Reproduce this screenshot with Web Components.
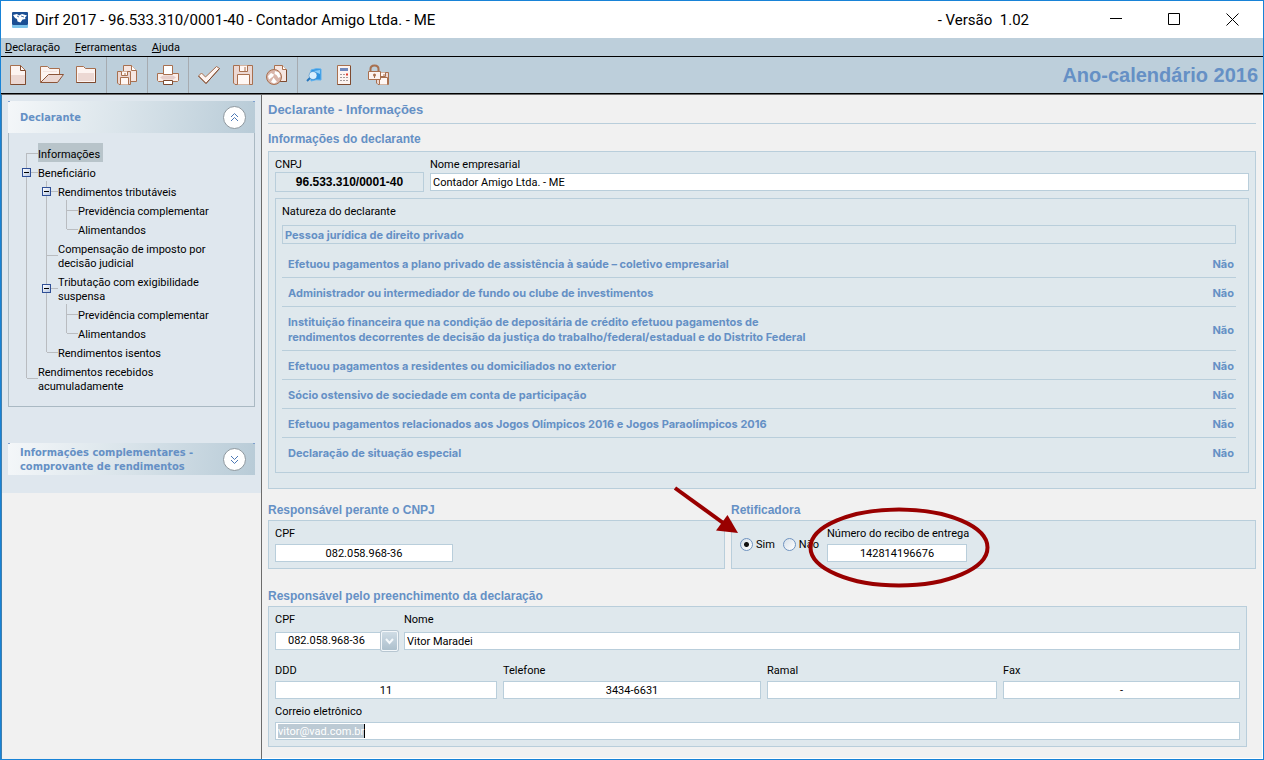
<!DOCTYPE html>
<html lang="pt-BR">
<head>
<meta charset="utf-8">
<title>Dirf 2017</title>
<style>
  :root {
    --blue: #6590c5;
    --bar: #bdcfdb;
    --panel: #dfe8ed;
    --page: #f1f1f1;
    --line: #b9cedb;
    --edge: #1883d7;
    --ui: Roboto, "Liberation Sans", sans-serif;
    --head: "Liberation Sans", Arial, sans-serif;
  }
  body { margin: 0; font: 11px/14px var(--ui); color: #000; }
</style>
</head>
<body>
<dirf-app></dirf-app>

<script>
const define = (name, html, ready) => {
  const template = document.createElement('template');
  template.innerHTML = '<style>*{box-sizing:border-box}:host{box-sizing:border-box}button,input,select{font:inherit;color:inherit}</style>' + html;
  customElements.define(name, class extends HTMLElement {
    constructor() {
      super();
      this.attachShadow({ mode: 'open' }).append(template.content.cloneNode(true));
    }
    connectedCallback() {
      if (ready && !this.done) { this.done = true; ready(this, this.shadowRoot); }
    }
  });
};

/* Toolbar glyphs, each on a 24 x 24 grid */
const floppy = (x, y, s) => `<g transform="translate(${x} ${y})"><path d="M.5 .5H${s - .5}V${s - .5}H2L.5 ${s - 2}Z" fill="#ecd8d3"/><path d="M${Math.round(s * .3) + .5} .5v${Math.round(s * .3)}h${Math.round(s * .42)}v-${Math.round(s * .3)}M${Math.round(s * .2) + .5} ${s - .5}v-${Math.round(s * .5)}h${Math.round(s * .6)}v${Math.round(s * .5)}" fill="#fff7f4"/><path d="M${Math.round(s * .6)} 2v${Math.round(s * .18)}"/></g>`;
const ICONS = {
  file: '<path d="M4.5 2.5h10l5 5v14h-15z" fill="#fdf4f1"/><path d="M5 12h14v9H5z" fill="#ecd8d3" stroke="none"/><path d="M14.500 2.500v5h5M19.500 8v13.500h-15" fill="none" stroke="#7d4a30"/>',
  open: '<path d="M.5 19V3.500h7l2 2h10V12" fill="#fdf4f1"/><path d="M.5 19.500l8-8h15l-6 8z" fill="#ecd8d3" stroke="#8b5438"/><path d="M3 8.500h14" stroke="#f3e2dd"/>',
  folder: '<path d="M2.500 19.500V3.500h7l2 2h10v14z" fill="#fdf4f1"/><path d="M4 10h16v8H4z" fill="#ecd8d3" stroke="none"/><path d="M21.500 6v13.500h-19" fill="none" stroke="#7d4a30"/>',
  copies: '<path d="M8.500 2.500h8l5 5v11h-13z" fill="#f6e6e1"/><path d="M16.500 2.500v5h5" fill="#fff"/>' + floppy(2, 8, 14),
  print: '<path d="M1.500 10.500h21v7l-1 1h-19l-1-1z" fill="#fbefeb"/><path d="M4 14.500l3-2h10l3 2-3 2H7z" fill="#e6ceca" stroke="none"/><path d="M7.500 2.500h9v9h-9z" fill="#fff"/><path d="M7.500 17.500h9v4h-9z" fill="#fff" stroke="#7d4a30"/>',
  check: '<path d="M1.500 13l3-3 4 4L19.500 3.500l3 2L9 20.500z" fill="#fdf4f1"/><path d="M22.500 5.500L9 20.500 1.500 13" fill="none" stroke="#7d4a30"/>',
  save: floppy(2, 2, 20),
  annul: '<path d="M9.500 2.500h8l4 4v12h-12z" fill="#f6e6e1"/><path d="M17.500 2.500v4h4" fill="#fff"/><path d="M21.500 7v11.500H15" stroke="#7d4a30"/><circle cx="9" cy="14" r="7.500" fill="#d9b5aa"/><path d="M3 13l3-3 3 1.500-1 2-4 3zM10 8l4 1.500 1.500 4-2 1.500-2-3-2-1zM6 19l2.500-4.500L12 19l-3 1.500z" fill="#fff" stroke="none"/>',
  find: '<path d="M9 7q5-2 10-1v11q-5-1-10 1z" fill="#2f93e0" stroke="#5bb0ef"/><path d="M11 8l7-1v4z" fill="#8dcdf8" stroke="none"/><circle cx="11" cy="12.500" r="3.500" fill="#d8efff" stroke="#eef8ff"/><circle cx="11" cy="12.500" r="4" fill="none" stroke="#3e8ccb" stroke-width=".6"/><path d="M8 15l-3 3" stroke="#2877bd" stroke-width="2"/>',
  calc: '<path d="M5.500 2.500h13v19h-13z" fill="#fdf4f1"/><path d="M18.500 3v18.500h-13" fill="none" stroke="#7d4a30"/><path d="M8 5h8v3H8z" fill="#7189bd" stroke="none"/><path d="M8 11.500h8M8 14.500h8M8 17.500h8" stroke="#a39a9a" stroke-dasharray="2 1"/><path d="M14 11.500h2" stroke="#e23b2c" stroke-width="2"/>',
  lock: floppy(10, 9, 13) + '<path d="M4.500 9V6q0-3.500 4-3.500t4 3.500v3" fill="none" stroke-width="2"/><path d="M2.500 8.500h12v8h-12z" fill="#fdf4f1"/><circle cx="8.500" cy="12" r="1.500" fill="#a8704f" stroke="none"/><path d="M8.500 12v3"/>'
};

define('title-bar', `
<style>
  :host { display: flex; align-items: center; height: 37px; padding-right: 2px; background: #fff; font-size: 15px; line-height: 20px; }
  .logo { flex: none; margin: 0 7px 0 11px; }
  .name { flex: 1; }
  .version { white-space: pre; margin-right: 58px; }
  button { width: 58px; height: 37px; border: 0; padding: 0; background: none; }
  svg { display: block; margin: 0 auto; }
</style>
<svg class="logo" width="16" height="16" viewBox="0 0 16 16"><rect width="16" height="13" rx="1" fill="#1b4f94"/><path d="M0 13h16v2q0 1-1 1H1q-1 0-1-1z" fill="#7cc3ea"/><path d="M1 3l4-1 2 1.500 1-.5 2-1 5 1.500-2 2 .5 1.500-3 .5-2 3-3-1-.500-2.500L3 6z" fill="#fff"/><path d="M5 4l2 1M9 4l3 1" stroke="#1b4f94" stroke-width=".8"/></svg>
<span class="name">Dirf 2017 - 96.533.310/0001-40 - Contador Amigo Ltda. - ME</span>
<span class="version">- Versão  1.02</span>
<button aria-label="Minimizar"><svg width="13" height="13"><path d="M0 5.500h12" stroke="#000"/></svg></button>
<button aria-label="Maximizar"><svg width="13" height="13"><path d="M.5 .5h11v11H.500z" fill="none" stroke="#000"/></svg></button>
<button aria-label="Fechar"><svg width="13" height="13"><path d="M.5 .5l12 12M12.500 .5l-12 12" stroke="#000"/></svg></button>
`);

define('menu-bar', `
<style>
  :host { display: block; background: var(--bar); border-bottom: 1px solid #000; }
  nav { display: flex; gap: 15px; padding: 3px 4px 1px; }
  button { border: 0; padding: 0; background: none; line-height: 14px; }
</style>
<nav><button><u>D</u>eclaração</button><button><u>F</u>erramentas</button><button><u>A</u>juda</button></nav>
`);

define('tool-button', `
<style>
  :host { display: block; width: 34px; }
  button { display: block; width: 100%; height: 36px; padding: 0; border: 0; background: none; }
  svg { display: block; margin: 0 auto; fill: none; stroke: #a8704f; }
</style>
<button><svg width="24" height="24" viewBox="0 0 24 24"></svg></button>
`, (el, root) => {
  root.querySelector('svg').innerHTML = ICONS[el.getAttribute('icon')];
  root.querySelector('button').setAttribute('aria-label', el.getAttribute('label'));
});

define('tool-bar', `
<style>
  :host { display: flex; align-items: center; background: var(--bar); border-bottom: 1px solid #000; }
  .group { display: flex; border-right: 1px solid #a6abb0; }
  .first { padding-right: 3px; }
  .wide { padding: 0 3px; }
  .last { border: 0; flex: 1; }
  .w40 { width: 40px; } .w32 { width: 32px; } .w28 { width: 28px; }
  .year { margin-right: 5px; color: var(--blue); font: bold 20px/24px var(--head); white-space: nowrap; }
</style>
<div class="group first"><tool-button icon="file" label="Nova declaração"></tool-button><tool-button icon="open" label="Abrir"></tool-button><tool-button icon="folder" label="Fechar declaração"></tool-button></div>
<div class="group"><tool-button class="w40" icon="copies" label="Cópia de segurança"></tool-button></div>
<div class="group"><tool-button class="w40" icon="print" label="Imprimir"></tool-button></div>
<div class="group wide"><tool-button icon="check" label="Verificar pendências"></tool-button><tool-button icon="save" label="Gravar"></tool-button><tool-button icon="annul" label="Transmitir"></tool-button></div>
<div class="group last"><tool-button class="w32" icon="find" label="Localizar"></tool-button><tool-button class="w28" icon="calc" label="Calculadora"></tool-button><tool-button class="w40" icon="lock" label="Gravar com senha"></tool-button></div>
<div class="year">Ano-calendário 2016</div>
`);

define('nav-panel', `
<style>
  :host { display: block; }
  header { display: flex; align-items: center; gap: 8px; min-height: 32px; padding: 0 9px 0 12px;
    background: linear-gradient(#7f9fce, #7f9fce) 0 0 / 2px 1px no-repeat, linear-gradient(#7f9fce, #7f9fce) 100% 0 / 2px 1px no-repeat, linear-gradient(100deg, #f4f7f9, #dbe5eb 45%, #b8cbd7); }
  h2 { flex: 1; margin: 0; padding-top: 2px; white-space: nowrap; color: var(--blue); font: bold 11px/14px "DejaVu Sans Condensed", "DejaVu Sans", sans-serif; }
  button { flex: none; width: 23px; height: 23px; padding: 0; border: 1px solid #8d979e; border-radius: 50%; background: #fff; }
  svg { display: block; margin: 0 auto; fill: none; stroke: #4c78b5; }
  :host([closed]) svg { transform: rotate(180deg); }
  .body { padding: 10px 8px 12px 29px; border: 1px solid #aab9c3; border-top: 0; }
  :host([closed]) .body { display: none; }
</style>
<header><h2><slot name="title"></slot></h2><button aria-label="Expandir ou recolher"><svg width="9" height="9"><path d="M1 4l3.500-3.500L8 4M1 8l3.500-3.500L8 8"/></svg></button></header>
<div class="body"><slot></slot></div>
`);

define('tree-node', `
<style>
  :host { display: block; position: relative; }
  :host::before { content: ""; position: absolute; left: -12px; top: 0; bottom: 0; border-left: 1px solid #b9bcc0; }
  :host([first])::before { top: 50%; }
  :host(:last-child)::before { bottom: 50%; }
  .row { position: relative; display: flex; }
  .row::before { content: ""; position: absolute; left: -11px; top: 50%; width: 11px; border-top: 1px solid #b9bcc0; }
  a { padding-top: 5px; color: #000; text-decoration: none; white-space: nowrap; }
  :host([current]) a { background: #b8c4ca; padding-right: 3px; }
  .toggle { display: none; position: absolute; left: -16px; top: 50%; width: 9px; height: 9px; margin-top: -4px; padding: 0; border: 1px solid #2f4f96; background: linear-gradient(#000, #000) center / 5px 1px no-repeat, linear-gradient(135deg, #fff, #b5c6e2); }
  :host([open]) .toggle { display: block; }
  .kids { padding-left: 20px; }
</style>
<div class="row"><button class="toggle" aria-label="Recolher"></button><a href="#"><slot></slot></a></div>
<div class="kids"><slot name="kids"></slot></div>
`);

define('side-bar', `
<style>
  :host { display: block; width: 261px; flex: none; border-left: 1px solid #3f7fae; border-right: 1px solid #6c6c6c; }
  .stack { display: grid; gap: 36px; padding: 6px 6px 18px; background: #dfe7ee; }
</style>
<div class="stack">
  <nav-panel><span slot="title">Declarante</span>
    <tree-node first current>Informações</tree-node>
    <tree-node open>Beneficiário
      <div slot="kids">
        <tree-node open>Rendimentos tributáveis
          <div slot="kids"><tree-node>Previdência complementar</tree-node><tree-node>Alimentandos</tree-node></div>
        </tree-node>
        <tree-node>Compensação de imposto por<br>decisão judicial</tree-node>
        <tree-node open>Tributação com exigibilidade<br>suspensa
          <div slot="kids"><tree-node>Previdência complementar</tree-node><tree-node>Alimentandos</tree-node></div>
        </tree-node>
        <tree-node>Rendimentos isentos</tree-node>
      </div>
    </tree-node>
    <tree-node>Rendimentos recebidos<br>acumuladamente</tree-node>
  </nav-panel>
  <nav-panel closed><span slot="title">Informações complementares -<br>comprovante de rendimentos</span></nav-panel>
</div>
`);

define('form-group', `
<style>
  :host { display: block; }
  h2 { margin: 0 0 3px; color: var(--blue); font: bold 12px/14px var(--head); }
  .box { border: 1px solid var(--line); background: var(--panel); padding: 6px; }
  :host([lead]) h2 { margin-bottom: 5px; }
  :host([lead]) .box { padding-bottom: 15px; }
</style>
<h2></h2><div class="box"><slot></slot></div>
`, (el, root) => { root.querySelector('h2').textContent = el.getAttribute('heading'); });

define('text-field', `
<style>
  :host { display: block; min-width: 0; }
  label { display: block; line-height: 14px; margin-bottom: var(--gap, 3px); white-space: nowrap; }
  input { display: block; width: 100%; height: 18px; padding: 0 2px; border: 1px solid var(--line); border-radius: 0; background: #fff; outline: 0; }
  :host([center]) input { text-align: center; }
  :host([strong]) label { margin: 0; }
  :host([strong]) input { height: 20px; background: none; font: bold 12px "Liberation Sans", Arial, sans-serif; }
  :host([marked]) input { color: #fff; background: linear-gradient(#000, #000) 88px 1px / 1px 14px no-repeat, linear-gradient(#bccad4, #bccad4) 2px 1px / 86px 14px no-repeat, #fff; }
</style>
<label for="f"></label><input id="f">
`, (el, root) => {
  root.querySelector('label').textContent = el.getAttribute('label');
  const input = root.querySelector('input');
  input.value = el.getAttribute('value') || '';
  input.readOnly = el.hasAttribute('strong');
});

define('combo-field', `
<style>
  :host { display: block; }
  label { display: block; line-height: 14px; margin-bottom: var(--gap, 3px); }
  .wrap { position: relative; }
  select { display: block; width: 100%; height: 18px; padding: 0 18px 0 12px; border: 1px solid var(--line); border-radius: 0; background: #fff; appearance: none; outline: 0; }
  .arrow { position: absolute; right: 0; top: -1px; width: 17px; height: 20px; border: 1px solid #f3f7fa; border-radius: 2px; background: linear-gradient(#cfdce5, #adc0cd); box-shadow: 0 0 0 1px #b7c6d1; pointer-events: none; }
  svg { display: block; margin: 6px auto 0; }
</style>
<label for="s">CPF</label>
<div class="wrap"><select id="s"><option>082.058.968-36</option></select><span class="arrow"><svg width="9" height="7"><path d="M1 1l3.500 4L8 1" fill="none" stroke="#f5f9fc" stroke-width="2"/></svg></span></div>
`);

define('nature-table', `
<style>
  :host { display: block; margin-top: 6px; padding: 6px 12px 6px 6px; border: 1px solid var(--line); }
  label { display: block; }
  .kind { display: block; width: 100%; height: 19px; margin: 6px 0 5px; padding: 0 2px; border: 1px solid var(--line); border-radius: 0; background: none; color: var(--blue); font: bold 11px/15px Inter, "Liberation Sans", sans-serif; }
  table { width: 100%; border-collapse: separate; border-spacing: 0; color: var(--blue); font: bold 11px/15px Inter, "Liberation Sans", sans-serif; }
  th, td { padding: 8px 2px 5px 6px; border-bottom: 1px solid var(--line); text-align: left; }
  td { text-align: right; }
  tr:last-child > * { border: 0; }
</style>
<label for="k">Natureza do declarante</label>
<input class="kind" id="k" readonly value="Pessoa jurídica de direito privado">
<table>
  <tr><th scope="row">Efetuou pagamentos a plano privado de assistência à saúde – coletivo empresarial</th><td>Não</td></tr>
  <tr><th scope="row">Administrador ou intermediador de fundo ou clube de investimentos</th><td>Não</td></tr>
  <tr><th scope="row">Instituição financeira que na condição de depositária de crédito efetuou pagamentos de<br>rendimentos decorrentes de decisão da justiça do trabalho/federal/estadual e do Distrito Federal</th><td>Não</td></tr>
  <tr><th scope="row">Efetuou pagamentos a residentes ou domiciliados no exterior</th><td>Não</td></tr>
  <tr><th scope="row">Sócio ostensivo de sociedade em conta de participação</th><td>Não</td></tr>
  <tr><th scope="row">Efetuou pagamentos relacionados aos Jogos Olímpicos 2016 e Jogos Paraolímpicos 2016</th><td>Não</td></tr>
  <tr><th scope="row">Declaração de situação especial</th><td>Não</td></tr>
</table>
`);

define('rectify-form', `
<style>
  :host { display: flex; align-items: center; gap: 8px; padding-left: 2px; position: relative; }
  label { display: flex; align-items: center; gap: 3px; }
  input { appearance: none; width: 13px; height: 13px; margin: 0; border: 1px solid #6f93c0; border-radius: 50%; background: linear-gradient(135deg, #d5dfe8, #fff); }
  input:checked { background: radial-gradient(circle, #111 2px, #0000 3px), linear-gradient(135deg, #d5dfe8, #fff); }
  text-field { width: 140px; }
  /* Red pen marks drawn across the form */
  .pen { position: absolute; left: -68px; top: -43px; pointer-events: none; overflow: visible; }
</style>
<label><input type="radio" name="r" checked>Sim</label>
<label><input type="radio" name="r">Não</label>
<text-field center label="Número do recibo de entrega" value="142814196676"></text-field>
<svg class="pen" width="325" height="110"><path d="M5 4L56 41" stroke="#900" stroke-width="4"/><path d="M68 49L46 46.500 57.500 31z" fill="#900"/><ellipse cx="229" cy="63.500" rx="88.500" ry="38" fill="none" stroke="#900" stroke-width="4"/></svg>
`);

define('declarant-form', `
<style>
  :host { display: block; flex: 1; min-width: 0; padding: 6px 6px 10px; background: var(--page); border: solid #fff; border-width: 0 1px 1px 0; }
  h1 { margin: 0 0 8px; padding: 1px 0 5px; border-bottom: 1px solid var(--line); color: var(--blue); font: bold 13px/16px var(--head); }
  .row { display: flex; gap: 6px; }
  .row .grow { flex: 1; }
  .id { width: 149px; }
  .pair { display: grid; grid-template-columns: 457fr 525fr; gap: 6px; margin: 14px 0 20px; }
  .cpf { width: 178px; }
  .narrow { margin-right: 9px; }
  .tight { --gap: 1px; }
  .loose { --gap: 5px; margin-bottom: 14px; }
  combo-field { width: 123px; }
  .phones { display: grid; grid-template-columns: 222fr 258fr 230fr 237fr; gap: 6px; margin-bottom: 6px; }
</style>
<h1>Declarante - Informações</h1>
<form-group lead heading="Informações do declarante">
  <div class="row tight"><text-field class="id" strong center label="CNPJ" value="96.533.310/0001-40"></text-field><text-field class="grow" label="Nome empresarial" value="Contador Amigo Ltda. - ME"></text-field></div>
  <nature-table></nature-table>
</form-group>
<div class="pair">
  <form-group heading="Responsável perante o CNPJ"><text-field class="cpf" center label="CPF" value="082.058.968-36"></text-field></form-group>
  <form-group heading="Retificadora"><rectify-form></rectify-form></form-group>
</div>
<form-group class="narrow" heading="Responsável pelo preenchimento da declaração">
  <div class="row loose"><combo-field></combo-field><text-field class="grow" label="Nome" value="Vitor Maradei"></text-field></div>
  <div class="phones"><text-field center label="DDD" value="11"></text-field><text-field center label="Telefone" value="3434-6631"></text-field><text-field center label="Ramal"></text-field><text-field center label="Fax" value="-"></text-field></div>
  <text-field marked label="Correio eletrônico" value="vitor@vad.com.br"></text-field>
</form-group>
`);

define('dirf-app', `
<style>
  :host { display: flex; flex-direction: column; min-height: 100vh; border: 1px solid var(--edge); background: var(--page); }
  .content { display: flex; flex: 1; border-top: 1px solid #6c6c6c; }
</style>
<title-bar></title-bar>
<menu-bar></menu-bar>
<tool-bar></tool-bar>
<div class="content"><side-bar></side-bar><declarant-form></declarant-form></div>
`);
</script>
</body>
</html>
